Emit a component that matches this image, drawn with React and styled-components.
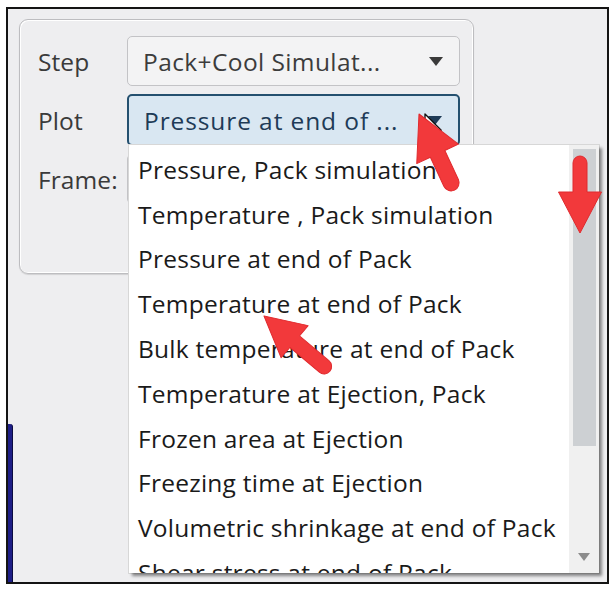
import React from 'react';
import styled, { createGlobalStyle } from 'styled-components';

const GlobalStyle = createGlobalStyle`
  html, body { margin: 0; padding: 0; background: #ffffff; }
  body { font-family: 'Open Sans', 'Noto Sans', sans-serif; }
`;

const Frame = styled.div`
  position: relative;
  margin: 7px 0 0 6px;
  width: 599px;
  height: 573px;
  border: 2px solid #141414;
  background: #eeeef0;
  display: flex;
  flex-direction: column;
  overflow: hidden;
`;

const Panel = styled.div`
  margin: 10px 0 0 11px;
  width: 455px;
  height: 259px;
  box-sizing: border-box;
  border: 1px solid #bdbdc0;
  border-radius: 9px;
  box-shadow: inset 1px 1px 0 #ffffff, inset -1px -1px 0 #ffffff, 0 1px 1px rgba(0, 0, 0, 0.12);
  padding: 16px 13px 0 18px;
  display: flex;
  flex-direction: column;
  gap: 8px;
`;

const Row = styled.div`
  display: flex;
  align-items: center;
  height: ${(p) => p.h || 50}px;
`;

const Label = styled.div`
  width: 89px;
  font-size: 24.5px;
  color: #3a3a3a;
  letter-spacing: 0.1px;
`;

const Combo = styled.div`
  position: relative;
  flex: 1;
  height: 100%;
  box-sizing: border-box;
  display: flex;
  align-items: center;
  justify-content: space-between;
  padding: 0 16px 0 15px;
  border-radius: 5px;
  border: ${(p) => (p.active ? '2px solid #24506f' : '1px solid #c3c3c6')};
  background: ${(p) => (p.active ? '#d9e7f2' : '#f3f3f4')};
  color: ${(p) => (p.active ? '#1e3b57' : '#3c3c3c')};
  font-size: 24.5px;
  letter-spacing: ${(p) => (p.active ? '0.9px' : '0.4px')};
`;

const Caret = styled.span`
  width: 0;
  height: 0;
  border-left: 7px solid transparent;
  border-right: 7px solid transparent;
  border-top: 9px solid ${(p) => p.color};
`;

const List = styled.div`
  position: absolute;
  top: 100%;
  left: 0;
  margin-top: 1px;
  width: 470px;
  height: 428px;
  background: #ffffff;
  box-shadow: 3px 3px 3px rgba(0, 0, 0, 0.45), 0 0 0 1px #d8d8d8;
  display: flex;
  z-index: 2;
  letter-spacing: 0;
`;

const Items = styled.div`
  flex: 1;
  padding-top: 2px;
  overflow: hidden;
`;

const Item = styled.div`
  height: 44.8px;
  display: flex;
  align-items: center;
  padding-left: 9px;
  white-space: nowrap;
  font-size: 24.5px;
  letter-spacing: 0.25px;
  color: #1a1a1a;
`;

const Scrollbar = styled.div`
  width: 30px;
  background: #f0f0f0;
  display: flex;
  flex-direction: column;
  align-items: center;
  padding: 4px 0 12px;
  box-sizing: border-box;
`;

const Thumb = styled.div`
  width: 23px;
  height: 297px;
  background: #cdd0d3;
`;

const ScrollArrow = styled.div`
  margin-top: auto;
  width: 0;
  height: 0;
  border-left: 6px solid transparent;
  border-right: 6px solid transparent;
  border-top: 8px solid #8c8c8c;
`;

const SideBar = styled.div`
  margin: 150px 0 0 0;
  width: 4px;
  height: 160px;
  background: #1e1e86;
  border-right: 1px solid #0b0b40;
  border-radius: 0 3px 0 0;
`;

const Overlay = styled.svg`
  position: absolute;
  left: -8px;
  top: -9px;
  width: 615px;
  height: 590px;
  pointer-events: none;
  z-index: 5;
`;

const items = [
  'Pressure, Pack simulation',
  'Temperature , Pack simulation',
  'Pressure at end of Pack',
  'Temperature at end of Pack',
  'Bulk temperature at end of Pack',
  'Temperature at Ejection, Pack',
  'Frozen area at Ejection',
  'Freezing time at Ejection',
  'Volumetric shrinkage at end of Pack',
  'Shear stress at end of Pack',
];

function RedArrow({ x, y, angle, length, head = 44, headLen = 42, shaft = 15 }) {
  const h = head / 2;
  const s = shaft / 2;
  const d = `M0 0 L${h} ${headLen} L${s} ${headLen} L${s} ${length - s} A${s} ${s} 0 0 1 ${-s} ${length - s} L${-s} ${headLen} L${-h} ${headLen} Z`;
  return (
    <g transform={`translate(${x} ${y}) rotate(${angle})`}>
      <path d={d} fill="#f2393b" stroke="#e02a2e" strokeWidth="1" strokeLinejoin="round" />
    </g>
  );
}

export default function App() {
  return (
    <>
      <GlobalStyle />
      <Frame>
        <Panel>
          <Row>
            <Label>Step</Label>
            <Combo>
              <span>Pack+Cool Simulat...</span>
              <Caret color="#3a3a3a" />
            </Combo>
          </Row>
          <Row h={52}>
            <Label>Plot</Label>
            <Combo active>
              <span>Pressure at end of ...</span>
              <Caret color="#1e3b57" />
              <List>
                <Items>
                  {items.map((t) => (
                    <Item key={t}>{t}</Item>
                  ))}
                </Items>
                <Scrollbar>
                  <Thumb />
                  <ScrollArrow />
                </Scrollbar>
              </List>
            </Combo>
          </Row>
          <Row>
            <Label>Frame:</Label>
            <Combo />
          </Row>
        </Panel>
        <SideBar />
        <Overlay viewBox="0 0 615 590">
          <g transform="translate(425 114) scale(1.35)">
            <path d="M0 0 L0 17 L4 13 L7 20 L10 19 L7 12 L12 12 Z" fill="#ffffff" stroke="#111" strokeWidth="1" strokeLinejoin="round" />
          </g>
          <RedArrow x={419} y={114} angle={-25} length={84} head={46} headLen={44} shaft={16} />
          <RedArrow x={580} y={233} angle={180} length={77} head={43} headLen={41} shaft={14} />
          <RedArrow x={264} y={316} angle={-50} length={86} head={42} headLen={40} shaft={15} />
        </Overlay>
      </Frame>
    </>
  );
}
